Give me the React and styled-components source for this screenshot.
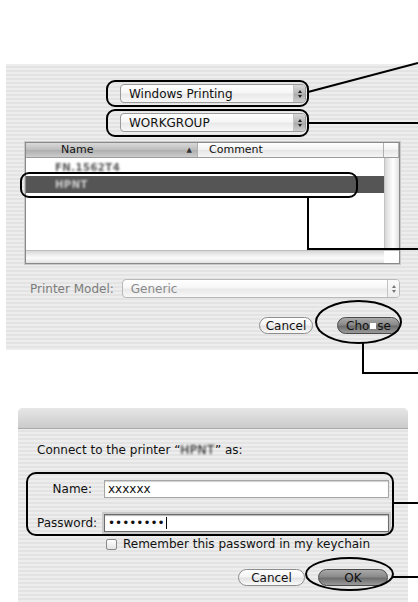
import React from "react";
import styled, { createGlobalStyle } from "styled-components";

const GlobalStyle = createGlobalStyle`
  html, body {
    margin: 0;
    padding: 0;
    background: #ffffff;
  }
  body {
    font-family: "DejaVu Sans", "Liberation Sans", sans-serif;
    color: #111;
  }
`;

const stripes = `repeating-linear-gradient(180deg, #ededed 0px, #ededed 2px, #e3e3e3 2px, #e3e3e3 4px)`;

const Page = styled.div`
  position: relative;
  width: 418px;
  height: 602px;
  overflow: hidden;
  display: flex;
  flex-direction: column;
`;

// ---------- chooser sheet ----------
const ChooserPanel = styled.div`
  margin: 64px 0 0 6px;
  width: 412px;
  height: 286px;
  box-sizing: border-box;
  padding: 20px 18px 0 19px;
  background: ${stripes};
  display: flex;
  flex-direction: column;
`;

const PopupStack = styled.div`
  display: flex;
  flex-direction: column;
  gap: 10px;
  padding-left: 95px;
`;

const Popup = styled.div`
  position: relative;
  width: ${(p) => p.$w}px;
  height: 19px;
  box-sizing: border-box;
  display: flex;
  align-items: center;
  padding-left: 8px;
  border: 1px solid ${(p) => (p.$disabled ? "#b8b8b8" : "#9a9a9a")};
  border-radius: 4px;
  background: linear-gradient(180deg, #ffffff 0%, #f6f6f6 45%, #e9e9e9 55%, #f8f8f8 100%);
  font-size: 12px;
  color: ${(p) => (p.$disabled ? "#8a8a8a" : "#111")};
  overflow: hidden;
`;

const PopupArrows = styled.div`
  margin-left: auto;
  width: 11px;
  height: 100%;
  display: flex;
  flex-direction: column;
  align-items: center;
  justify-content: center;
  gap: 2px;
  border-left: 1px solid #c4c4c4;
  background: ${(p) =>
    p.$disabled
      ? "linear-gradient(180deg, #fafafa, #eeeeee)"
      : "linear-gradient(180deg, #d8d8d8 0%, #b6b6b6 50%, #a6a6a6 51%, #cfcfcf 100%)"};
`;

const Tri = styled.span`
  width: 0;
  height: 0;
  border-left: 2.5px solid transparent;
  border-right: 2.5px solid transparent;
  ${(p) => (p.$up ? "border-bottom" : "border-top")}: 3px solid ${(p) => (p.$disabled ? "#777" : "#222")};
`;

const ListBox = styled.div`
  margin-top: 10px;
  width: 375px;
  height: 122px;
  box-sizing: border-box;
  border: 1px solid #8a8a8a;
  box-shadow: 0 0 0 1px #c9c9c9;
  background: #fff;
  display: flex;
  flex-direction: column;
`;

const Header = styled.div`
  display: flex;
  height: 14px;
  flex: none;
  border-bottom: 1px solid #9c9c9c;
  font-size: 11px;
  line-height: 14px;
`;

const HeaderCell = styled.div`
  width: ${(p) => (p.$w ? `${p.$w}px` : "auto")};
  flex: ${(p) => (p.$w ? "none" : "1")};
  box-sizing: border-box;
  padding-left: ${(p) => p.$pad || 0}px;
  display: flex;
  align-items: center;
  border-right: 1px solid #b0b0b0;
  background: ${(p) =>
    p.$sorted
      ? "linear-gradient(180deg, #d9d9d9 0%, #bcbcbc 50%, #aeaeae 51%, #cdcdcd 100%)"
      : "linear-gradient(180deg, #ffffff 0%, #f1f1f1 50%, #e6e6e6 51%, #f5f5f5 100%)"};
`;

const SortMark = styled.span`
  margin-left: auto;
  margin-right: 5px;
  font-size: 7px;
  color: #333;
`;

const ListBody = styled.div`
  flex: 1;
  display: flex;
  min-height: 0;
`;

const Rows = styled.div`
  flex: 1;
  display: flex;
  flex-direction: column;
  padding-top: 1px;
`;

const Row = styled.div`
  height: 17px;
  display: flex;
  align-items: center;
  padding-left: 29px;
  font-size: 10px;
  font-weight: bold;
  background: ${(p) => (p.$selected ? "#555555" : "#ffffff")};
  color: ${(p) => (p.$selected ? "#cfcfcf" : "#555")};
`;

const Blurred = styled.span`
  filter: blur(0.9px);
  letter-spacing: 0.5px;
`;

const VScroll = styled.div`
  width: 14px;
  border-left: 1px solid #c2c2c2;
  background: linear-gradient(90deg, #d6d6d6 0%, #f4f4f4 40%, #ffffff 60%, #e0e0e0 100%);
`;

const HScrollRow = styled.div`
  height: 12px;
  flex: none;
  display: flex;
  border-top: 1px solid #bdbdbd;
`;

const HScroll = styled.div`
  flex: 1;
  background: linear-gradient(180deg, #d8d8d8 0%, #f2f2f2 40%, #fbfbfb 60%, #e2e2e2 100%);
`;

const Corner = styled.div`
  width: 15px;
  background: #ffffff;
`;

const ModelRow = styled.div`
  margin-top: 15px;
  display: flex;
  align-items: center;
  gap: 8px;
  padding-left: 5px;
`;

const Label = styled.span`
  font-size: 12px;
  color: ${(p) => (p.$dim ? "#7c7c7c" : "#111")};
  white-space: nowrap;
`;

const ButtonRow = styled.div`
  margin-top: ${(p) => p.$top}px;
  display: flex;
  justify-content: flex-end;
  gap: ${(p) => p.$gap}px;
`;

const Button = styled.div`
  width: ${(p) => p.$w}px;
  height: 17px;
  box-sizing: border-box;
  border-radius: 9px;
  display: flex;
  align-items: center;
  justify-content: center;
  font-size: 12px;
  color: #111;
  border: 1px solid ${(p) => (p.$default ? "#4a4a4a" : "#8d8d8d")};
  background: ${(p) =>
    p.$default
      ? "linear-gradient(180deg, #a9a9a9 0%, #8a8a8a 45%, #6e6e6e 55%, #9a9a9a 100%)"
      : "linear-gradient(180deg, #ffffff 0%, #f4f4f4 45%, #e2e2e2 55%, #fafafa 100%)"};
`;

const WhiteBlot = styled.span`
  display: inline-block;
  width: 6px;
  height: 6px;
  background: #fff;
  margin: 0 1px;
`;

// ---------- password sheet ----------
const LoginPanel = styled.div`
  margin: 58px 0 0 18px;
  width: 390px;
  height: 194px;
  border-radius: 5px 5px 0 0;
  background: ${stripes};
  display: flex;
  flex-direction: column;
  overflow: hidden;
`;

const TitleBar = styled.div`
  height: 20px;
  flex: none;
  border-bottom: 1px solid #a9a9a9;
  background: linear-gradient(180deg, #e6e6e6 0%, #d6d6d6 60%, #cbcbcb 100%);
`;

const LoginBody = styled.div`
  padding: 14px 20px 0 19px;
  display: flex;
  flex-direction: column;
`;

const FieldGrid = styled.div`
  margin-top: 23px;
  display: grid;
  grid-template-columns: 55px 285px;
  column-gap: 12px;
  row-gap: 16px;
  align-items: center;
`;

const FieldLabel = styled.span`
  text-align: right;
  font-size: 12px;
  white-space: nowrap;
`;

const Field = styled.div`
  height: 18px;
  box-sizing: border-box;
  display: flex;
  align-items: center;
  padding-left: 3px;
  background: #fff;
  font-size: 12px;
  border: 1px solid ${(p) => (p.$focus ? "#6c6c6c" : "#a6a6a6")};
  box-shadow: ${(p) =>
    p.$focus ? "0 0 0 2px #c9c9c9, inset 0 1px 1px #b5b5b5" : "inset 0 1px 1px #cfcfcf"};
`;

const Caret = styled.span`
  width: 1px;
  height: 12px;
  background: #000;
  margin-left: 1px;
`;

const CheckRow = styled.div`
  margin-top: 5px;
  padding-left: 69px;
  display: flex;
  align-items: center;
  gap: 6px;
`;

const CheckBox = styled.span`
  width: 11px;
  height: 11px;
  box-sizing: border-box;
  border: 1px solid #8a8a8a;
  border-radius: 2px;
  background: linear-gradient(180deg, #ffffff, #e4e4e4);
`;

// ---------- callout overlay ----------
const Overlay = styled.svg`
  position: absolute;
  left: 0;
  top: 0;
  pointer-events: none;
`;

export default function App() {
  return (
    <Page>
      <GlobalStyle />
      <ChooserPanel>
        <PopupStack>
          <Popup $w={186}>
            Windows Printing
            <PopupArrows>
              <Tri $up />
              <Tri />
            </PopupArrows>
          </Popup>
          <Popup $w={186}>
            WORKGROUP
            <PopupArrows>
              <Tri $up />
              <Tri />
            </PopupArrows>
          </Popup>
        </PopupStack>

        <ListBox>
          <Header>
            <HeaderCell $w={172} $pad={35} $sorted>
              Name
              <SortMark>▲</SortMark>
            </HeaderCell>
            <HeaderCell $pad={11}>Comment</HeaderCell>
            <HeaderCell $w={15} />
          </Header>
          <ListBody>
            <Rows>
              <Row>
                <Blurred>FN.1562T4</Blurred>
              </Row>
              <Row $selected>
                <Blurred>HPNT</Blurred>
              </Row>
            </Rows>
            <VScroll />
          </ListBody>
          <HScrollRow>
            <HScroll />
            <Corner />
          </HScrollRow>
        </ListBox>

        <ModelRow>
          <Label $dim>Printer Model:</Label>
          <Popup $w={281} $disabled>
            Generic
            <PopupArrows $disabled>
              <Tri $up $disabled />
              <Tri $disabled />
            </PopupArrows>
          </Popup>
        </ModelRow>

        <ButtonRow $top={19} $gap={24}>
          <Button $w={54}>Cancel</Button>
          <Button $w={63} $default>
            Cho<WhiteBlot />se
          </Button>
        </ButtonRow>
      </ChooserPanel>

      <LoginPanel>
        <TitleBar />
        <LoginBody>
          <Label>
            Connect to the printer “<Blurred>HPNT</Blurred>” as:
          </Label>
          <FieldGrid>
            <FieldLabel>Name:</FieldLabel>
            <Field>xxxxxx</Field>
            <FieldLabel>Password:</FieldLabel>
            <Field $focus>
              ••••••••
              <Caret />
            </Field>
          </FieldGrid>
          <CheckRow>
            <CheckBox />
            <Label>Remember this password in my keychain</Label>
          </CheckRow>
          <ButtonRow $top={18} $gap={13}>
            <Button $w={67}>Cancel</Button>
            <Button $w={70} $default>OK</Button>
          </ButtonRow>
        </LoginBody>
      </LoginPanel>

      <Overlay width="418" height="602" viewBox="0 0 418 602">
        <g fill="none" stroke="#000" strokeWidth="2">
          <rect x="107" y="81" width="201" height="25" rx="8" />
          <rect x="107" y="110" width="201" height="26" rx="8" />
          <line x1="308" y1="92" x2="418" y2="63" />
          <line x1="308" y1="123" x2="418" y2="123" />
          <rect x="21" y="173" width="336" height="24" rx="8" />
          <polyline points="308,197 308,249 418,249" />
          <ellipse cx="358.5" cy="322" rx="42.5" ry="21" />
          <polyline points="363,343 363,373 418,373" />
          <rect x="27" y="473" width="366" height="62" rx="9" />
          <line x1="393" y1="503" x2="418" y2="503" />
          <ellipse cx="349.5" cy="574" rx="43.5" ry="16" />
          <line x1="393" y1="577" x2="418" y2="577" />
        </g>
      </Overlay>
    </Page>
  );
}
